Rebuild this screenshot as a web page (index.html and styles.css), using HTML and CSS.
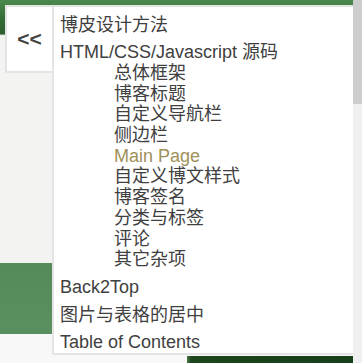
FILE: index.html
```html
<!DOCTYPE html>
<html lang="zh">
<head>
    <meta charset="UTF-8">
    <meta name="viewport" content="width=device-width, initial-scale=1.0">
    <title>博皮设计方法</title>
    <link rel="stylesheet" href="styles.css">
</head>
<body>
    <!-- Page behind the floating menu -->
    <div class="page">
        <div class="menu">
            <a href="#" class="toggle">&lt;&lt;</a>

            <!-- Table of contents panel -->
            <div class="panel">
                <ul class="toc">
                    <li>博皮设计方法</li>
                    <li>HTML/CSS/Javascript 源码
                        <ul class="sub">
                            <li>总体框架</li>
                            <li>博客标题</li>
                            <li>自定义导航栏</li>
                            <li>侧边栏</li>
                            <li class="current">Main Page</li>
                            <li>自定义博文样式</li>
                            <li>博客签名</li>
                            <li>分类与标签</li>
                            <li>评论</li>
                            <li>其它杂项</li>
                        </ul>
                    </li>
                    <li>Back2Top</li>
                    <li>图片与表格的居中</li>
                    <li>Table of Contents</li>
                </ul>
            </div>
        </div>
        <div class="strip"></div>
    </div>

    <!-- Scrollbar -->
    <div class="scrollbar">
        <div class="thumb"></div>
    </div>
</body>
</html>
```

FILE: styles.css
```css
/* General Reset */
* {
    margin: 0;
    padding: 0;
    box-sizing: border-box;
}

body {
    width: 362px;
    height: 363px;
    overflow: hidden;
    display: flex;
    font-family: 'Liberation Sans', Arial, 'Noto Sans CJK SC', sans-serif;
    color: #404040;
}

/* Page background: header, light body, green band */
.page {
    flex: 1;
    overflow: hidden;
    background: linear-gradient(180deg,
        #4a894d 0, #356e39 18px, #2c5d2d 34px, #cddbcd 35px,
        #f3f4f2 36px, #f3f4f2 263px,
        #558a5b 263px, #5a8f60 334px,
        #f7f8f7 334px);
}

.menu {
    display: flex;
    align-items: flex-start;
    padding: 5px 0 0 5px;
}

/* Collapse button */
.toggle {
    flex-shrink: 0;
    width: 47px;
    height: 68px;
    display: flex;
    align-items: center;
    justify-content: center;
    background: #fff;
    border: 2px solid #e4e4e4;
    border-right: none;
    color: #444;
    font-size: 21px;
    font-weight: bold;
    text-decoration: none;
    padding-bottom: 1px;
}

/* Panel (clipped, more entries below) */
.panel {
    flex-shrink: 0;
    width: 310px;
    height: 350px;
    overflow: hidden;
    background: #fff;
    border: 2px solid #e4e4e4;
    padding: 4px 0 0 6px;
}

.toc {
    list-style: none;
    font-size: 18px;
    line-height: 20.7px;
}

.toc > li {
    padding: 3.5px 0;
}

.sub {
    list-style: none;
    padding-left: 54px;
}

.sub .current {
    color: #a0915a;
}

.strip {
    margin: 1px 0 0 187px;
    height: 10px;
    background: linear-gradient(90deg, #4a7a48 0, #1c451d 4px, #173f1a 100%);
}

/* Scrollbar */
.scrollbar {
    width: 9px;
    flex-shrink: 0;
    background: #f0f0f0;
}

.thumb {
    height: 104px;
    background: #cdcdcd;
}
```
